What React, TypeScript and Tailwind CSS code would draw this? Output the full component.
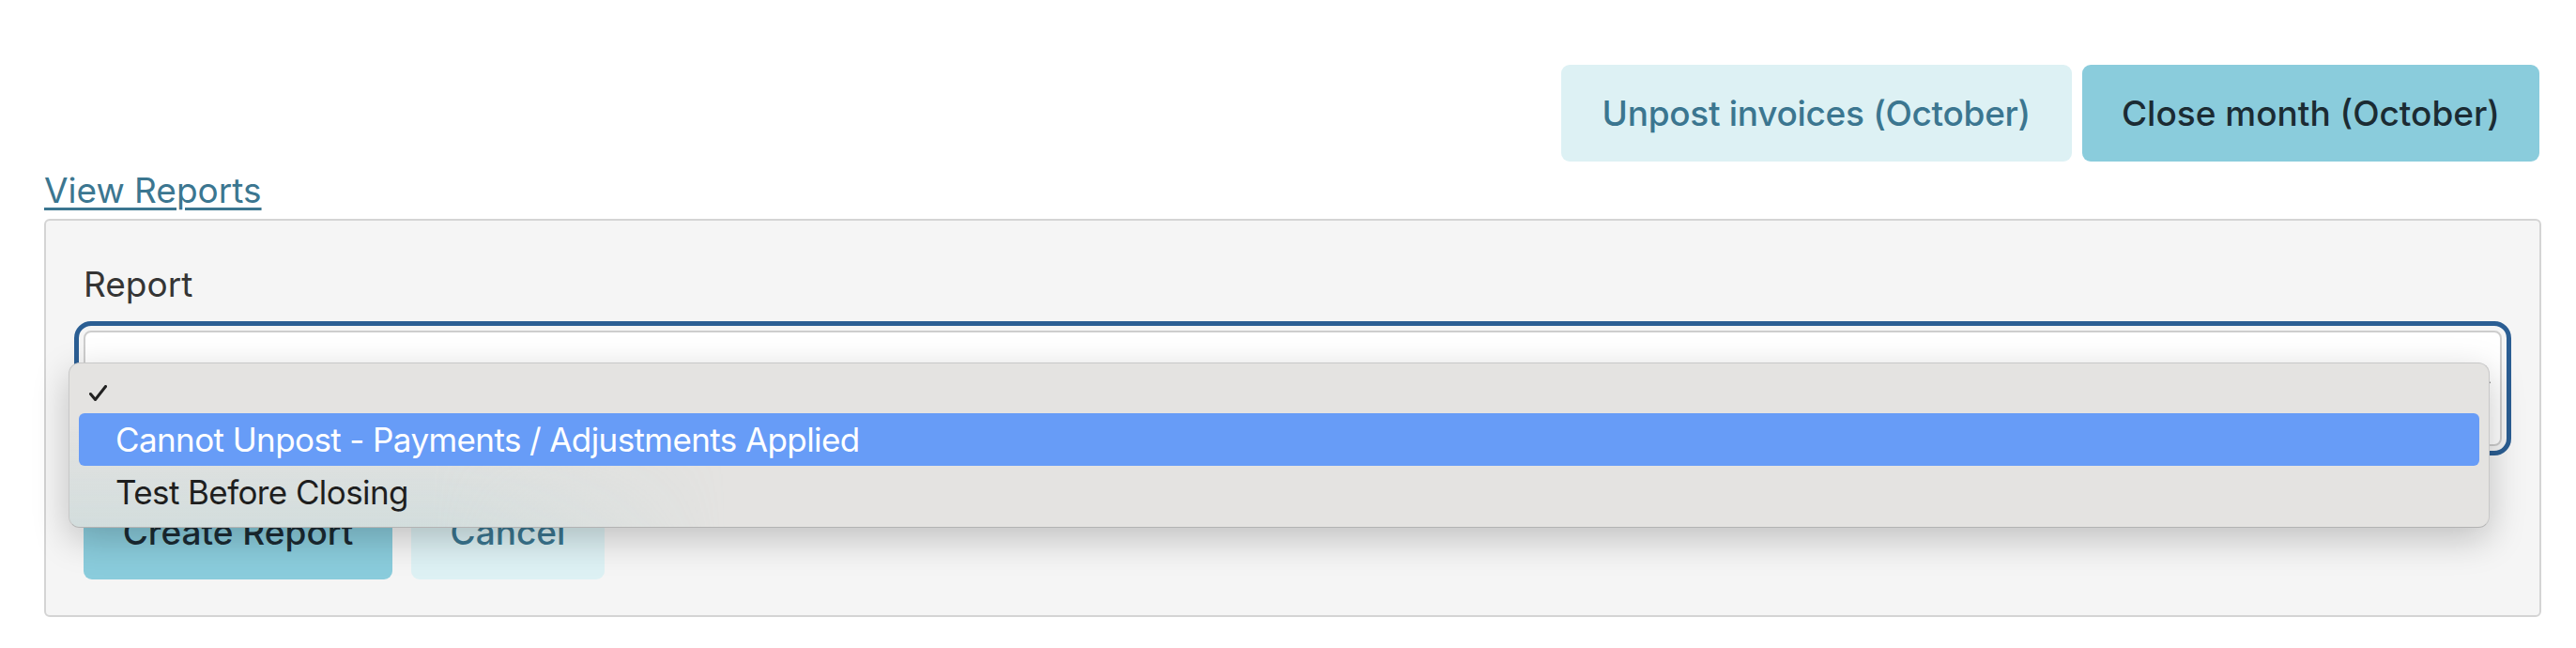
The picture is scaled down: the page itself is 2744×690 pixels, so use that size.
import { ChevronDown } from "lucide-react";

const options = [
  { label: "", checked: true },
  { label: "Cannot Unpost - Payments / Adjustments Applied", active: true },
  { label: "Test Before Closing" },
];

function CheckMark() {
  return (
    <svg width="19" height="18" viewBox="0 0 19 18" fill="none" className="absolute left-[11px] top-[23px]">
      <path d="M1.5 9.5 L6.5 15.5 L17.5 1.5" stroke="#222" strokeWidth="3" strokeLinecap="round" strokeLinejoin="round" />
    </svg>
  );
}

export default function App() {
  return (
    <div className="min-h-[690px] bg-white pl-[47px] pr-[37px] pt-[69px] font-['Inter',sans-serif]">
      <div className="flex justify-end gap-[11px] pr-[2px]">
        <button className="h-[103px] rounded-[9px] bg-[#ddf1f4] px-[44px] text-[37px] font-medium tracking-[-0.3px] text-[#3b7690]">
          Unpost invoices (October)
        </button>
        <button className="h-[103px] rounded-[9px] bg-[#8accdc] px-[42px] text-[37px] font-medium text-[#1b2b33]">
          Close month (October)
        </button>
      </div>

      <a
        href="#"
        className="mt-[3px] block w-fit text-[37px] leading-[55px] text-[#3b7690] underline decoration-[2.5px] underline-offset-[5px]"
      >
        View Reports
      </a>

      <div className="mt-[3px] rounded-[6px] border-2 border-[#d4d4d4] bg-[#f5f5f5] px-[40px] pb-[38px] pt-[40px]">
        <label className="block text-[37px] leading-[55px] text-[#353535]">Report</label>

        <div className="relative mt-[22px] h-[123px]">
          <div className="h-full rounded-[8px] border-2 border-[#cdcdcd] bg-white outline-[5px] outline-offset-[5px] outline-[#2b5e93] outline-solid">
            <ChevronDown className="absolute right-[8px] top-[47px] h-[22px] w-[22px] text-[#333]" strokeWidth={2.5} />
          </div>

          {/* open native dropdown */}
          <div className="absolute left-[-16px] right-[13px] top-[34px] z-10 overflow-hidden rounded-[12px] border border-[#c8c8c8] border-b-[#b3b3b3] bg-[#e4e3e1] px-[10px] pb-[9px] shadow-[0_12px_38px_rgba(0,0,0,0.22)]">
            <div className="pointer-events-none absolute bottom-0 left-0 h-[110px] w-[700px] bg-[linear-gradient(to_top,rgba(160,205,210,0.25),rgba(160,205,210,0))] [mask-image:linear-gradient(to_right,black_55%,transparent)]" />
            {options.map((o, i) => (
              <div
                key={i}
                className={`relative flex items-center rounded-[6px] pl-[39px] text-[35px] tracking-[-0.6px] ${
                  i === 0 ? "h-[53px]" : "h-[56px]"
                } ${o.active ? "bg-[#679cf7] text-white" : "text-[#1e1e1e]"}`}
              >
                {o.checked && <CheckMark />}
                {o.label}
              </div>
            ))}
          </div>
        </div>

        <div className="mt-[41px] flex gap-[20px]">
          <button className="h-[101px] w-[329px] rounded-[9px] bg-[#8accdc] text-[37px] font-medium text-[#1b2b33]">
            Create Report
          </button>
          <button className="h-[101px] w-[206px] rounded-[9px] bg-[#ddf1f4] text-[37px] font-medium text-[#3b7690]">
            Cancel
          </button>
        </div>
      </div>
    </div>
  );
}
